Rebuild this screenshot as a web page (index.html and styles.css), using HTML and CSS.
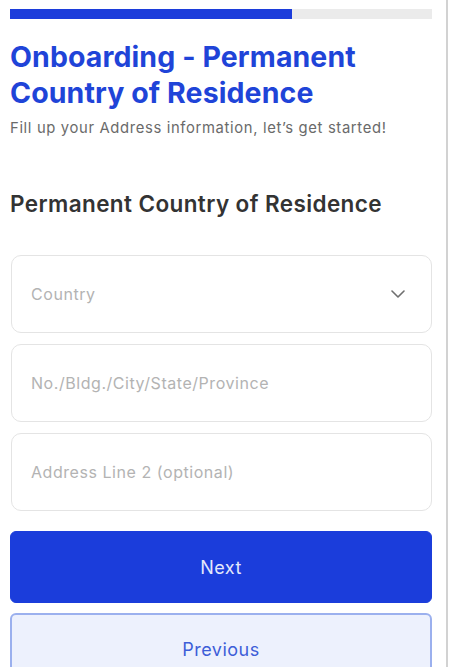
FILE: index.html
```html
<!DOCTYPE html>
<html lang="en">
<head>
<meta charset="utf-8">
<title>Onboarding - Permanent Country of Residence</title>
<link rel="stylesheet" href="styles.css">
</head>
<body>
<div class="screen">
  <div class="progress"><div class="progress-fill"></div></div>
  <h1 class="title">Onboarding - Permanent<br>Country of Residence</h1>
  <p class="subtitle">Fill up your Address information, let’s get started!</p>
  <h2 class="section">Permanent Country of Residence</h2>
  <div class="fields">
    <div class="field">
      <span class="placeholder">Country</span>
      <svg class="chevron" width="14" height="8" viewBox="0 0 14 8"><path d="M1 1l6 6 6-6" fill="none" stroke="#6f6f6f" stroke-width="1.6" stroke-linecap="round" stroke-linejoin="round"/></svg>
    </div>
    <div class="field"><span class="placeholder">No./Bldg./City/State/Province</span></div>
    <div class="field"><span class="placeholder">Address Line 2 (optional)</span></div>
  </div>
  <div class="actions">
    <button class="btn btn-primary">Next</button>
    <button class="btn btn-secondary">Previous</button>
  </div>
</div>
</body>
</html>
```
FILE: styles.css
```css
* { box-sizing: border-box; }
html, body { margin: 0; padding: 0; background: #fff; }
body { font-family: "Inter", "Lato", sans-serif; overflow: hidden; }
.screen {
  width: 448px;
  height: 667px;
  border-right: 2px solid #d2d2d2;
  padding: 9px 15px 0 10px;
}
.progress {
  height: 10px;
  background: #ebebeb;
  width: 422px;
}
.progress-fill {
  width: 282px;
  height: 100%;
  background: #1c3ddb;
}
.title {
  margin: 20px 0 0;
  font-size: 28.5px;
  line-height: 36px;
  font-weight: 700;
  color: #1f44d8;
  letter-spacing: 0.1px;
}
.subtitle {
  margin: 7px 0 0;
  font-size: 14.8px;
  line-height: 20px;
  color: #6a6a6a;
  letter-spacing: 0.65px;
}
.section {
  margin: 52px 0 0;
  font-size: 22.5px;
  line-height: 28px;
  font-weight: 600;
  color: #333;
  letter-spacing: 0.4px;
}
.fields {
  margin-top: 37px;
  display: flex;
  flex-direction: column;
  gap: 11px;
  width: 421px;
  margin-left: 1px;
}
.field {
  height: 78px;
  border: 1px solid #e4e4e4;
  border-radius: 10px;
  display: flex;
  align-items: center;
  justify-content: space-between;
  padding: 0 26px 0 19px;
}
.placeholder {
  font-size: 16px;
  color: #b3b3b3;
  letter-spacing: 0.55px;
}
.chevron { display: block; }
.actions {
  margin-top: 20px;
  display: flex;
  flex-direction: column;
  gap: 10px;
  width: 422px;
}
.btn {
  font-family: inherit;
  font-size: 18px;
  letter-spacing: 0.5px;
  border-radius: 6px;
  height: 72px;
  width: 100%;
  cursor: pointer;
}
.btn-primary {
  background: #1b3ddb;
  border: 1px solid #1b3ddb;
  color: #e3e8fb;
}
.btn-secondary {
  background: #edf1fd;
  border: 2px solid #9bb0ee;
  color: #3d5ed8;
  padding-top: 2px;
}
```
